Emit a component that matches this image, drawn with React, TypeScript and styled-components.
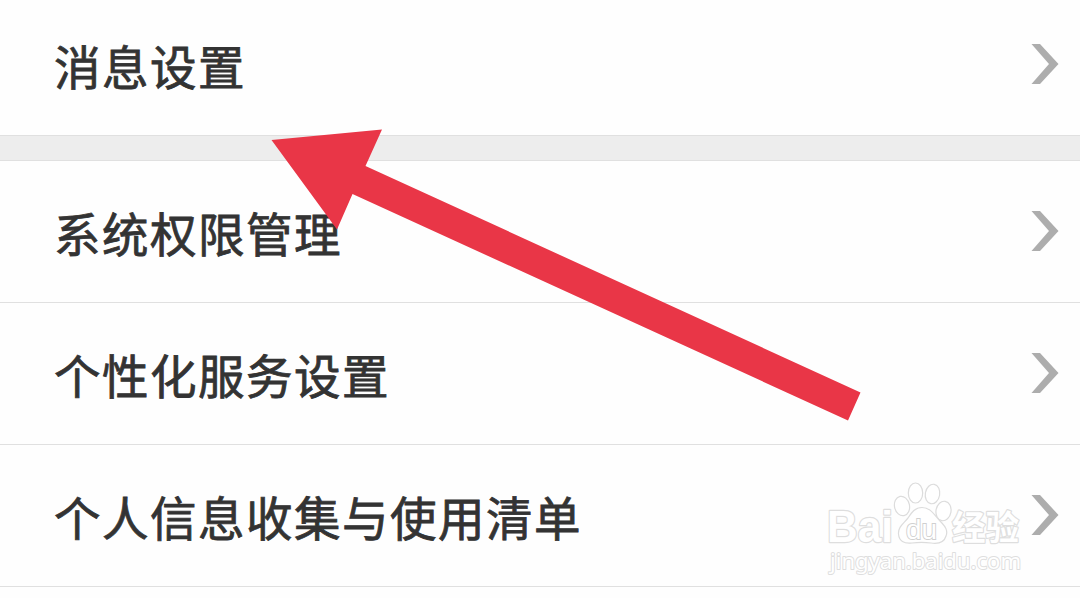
import React from "react";
import styled, { createGlobalStyle } from "styled-components";

const GlobalStyle = createGlobalStyle`
  body {
    margin: 0;
    background: #fefefe;
    overflow: hidden;
  }
`;

const Page = styled.main`
  position: relative;
  width: 1080px;
  height: 598px;
  overflow: hidden;
  background: #fefefe;
  font-family: "Noto Sans CJK SC", sans-serif;
`;

const Row = styled.div<{ $first?: boolean }>`
  display: flex;
  align-items: center;
  justify-content: space-between;
  box-sizing: border-box;
  height: ${(p) => (p.$first ? 136 : 142)}px;
  padding: 0 21px ${(p) => (p.$first ? 7 : 2)}px 54px;
  border-bottom: 1px solid #e0e0e0;
`;

const Divider = styled.div`
  box-sizing: border-box;
  height: 25px;
  background: #ededed;
  border-bottom: 1px solid #e0e0e0;
`;

const Label = styled.span`
  margin-top: 2px;
  font-size: 46.5px;
  line-height: 60px;
  letter-spacing: 1.5px;
  color: #333;
  -webkit-text-stroke: 0.8px #333;
  white-space: nowrap;
`;

const Chevron = styled.svg`
  display: block;
  width: 28px;
  height: 40px;
  fill: #adadad;
`;

const Arrow = styled.svg`
  position: absolute;
  left: 0;
  top: 0;
  pointer-events: none;
`;

const Watermark = styled.svg`
  position: absolute;
  left: 820px;
  top: 475px;
  pointer-events: none;
`;

const SettingRow = ({ text, first }: { text: string; first?: boolean }) => (
  <Row $first={first}>
    <Label>{text}</Label>
    <Chevron viewBox="0 0 28 40">
      <path d="M0.5 0H9L27.5 20L9 40H0.5L18 20Z" />
    </Chevron>
  </Row>
);

const settings = ["系统权限管理", "个性化服务设置", "个人信息收集与使用清单"];

export default function App() {
  return (
    <>
      <GlobalStyle />
      <Page>
        <SettingRow text="消息设置" first />
        <Divider />
        {settings.map((s) => (
          <SettingRow key={s} text={s} />
        ))}
        <Arrow width="1080" height="598" viewBox="0 0 1080 598">
          <path
            d="M271.5 140L382 129.5L365.5 166L860.5 392.5L848 420.5L352.5 194L337 229.5Z"
            fill="#e93647"
          />
        </Arrow>
        <Watermark width="210" height="105" viewBox="820 475 210 105">
          <g
            fill="#fff"
            stroke="#dedede"
            strokeWidth="2.4"
            strokeLinejoin="round"
            paintOrder="stroke"
            fontFamily='"Liberation Sans", sans-serif'
          >
            <text x="827" y="542" fontSize="44.5" fontWeight="700" textLength="66" lengthAdjust="spacingAndGlyphs">
              Bai
            </text>
            <text x="952" y="539.5" fontSize="34" fontWeight="700" fontFamily='"Noto Sans CJK SC", sans-serif' textLength="67" lengthAdjust="spacingAndGlyphs">
              经验
            </text>
            <text x="830" y="568.5" fontSize="22.5" strokeWidth="2" fontFamily='"Noto Sans", sans-serif' textLength="191" lengthAdjust="spacingAndGlyphs">
              jingyan.baidu.com
            </text>
          </g>
          <g fill="#fff" stroke="#dcdcdc" strokeWidth="1.2">
            <ellipse cx="902" cy="506" rx="7.5" ry="9.8" transform="rotate(-12 902 506)" />
            <ellipse cx="915.5" cy="493" rx="7.2" ry="10" />
            <ellipse cx="932.5" cy="494" rx="7.2" ry="9.8" transform="rotate(10 932.5 494)" />
            <ellipse cx="943.5" cy="511" rx="7.5" ry="9.8" transform="rotate(10 943.5 511)" />
            <path d="M922 507.500C931 507.500 934 515 940 521C946 527 948 531 946 536C944 543 938 544 931 543C924 542 919 542 912 543C904 544 899 541 898.500 534C898 527 903 524 908 518C912 512 915 507.500 922 507.500Z" />
          </g>
          <text x="906" y="538.5" fontSize="28" fill="#fff" stroke="#d0d0d0" strokeWidth="1.8" paintOrder="stroke" fontFamily='"Liberation Sans", sans-serif' textLength="31" lengthAdjust="spacingAndGlyphs">
            du
          </text>
        </Watermark>
      </Page>
    </>
  );
}
